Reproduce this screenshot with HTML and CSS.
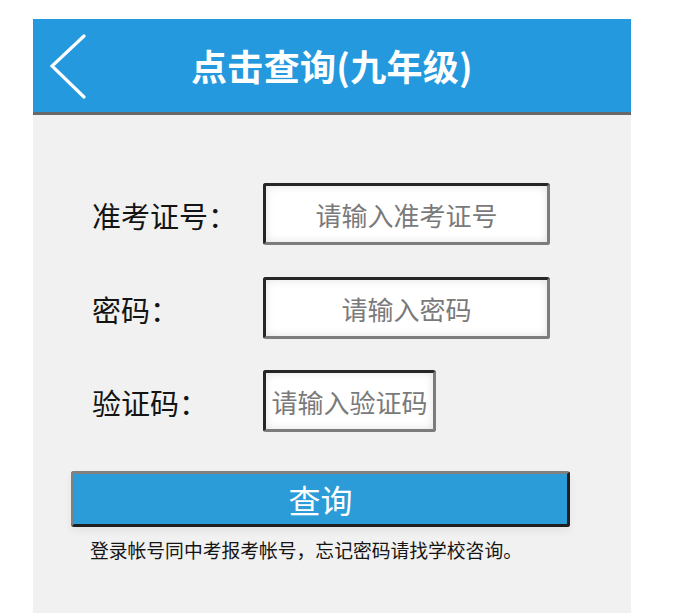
FILE: index.html
```html
<!DOCTYPE html>
<html lang="zh-CN">
<head>
<meta charset="utf-8">
<title>点击查询(九年级)</title>
<link rel="stylesheet" href="styles.css">
</head>
<body>
<div class="page">
  <div class="app">
    <header class="topbar">
      <a class="back" href="#" aria-label="返回">
        <svg width="40" height="66" viewBox="0 0 40 66">
          <polyline points="34,3 2,33 34,64" fill="none" stroke="#ffffff" stroke-width="3.2" stroke-linecap="round" stroke-linejoin="miter"/>
        </svg>
      </a>
      <h1 class="title">点击查询(九年级)</h1>
      <span></span>
    </header>
    <form class="form">
      <div class="row">
        <label class="label">准考证号：</label>
        <input class="field" type="text" placeholder="请输入准考证号">
      </div>
      <div class="row">
        <label class="label">密码：</label>
        <input class="field" type="password" placeholder="请输入密码">
      </div>
      <div class="row">
        <label class="label">验证码：</label>
        <input class="field short" type="text" placeholder="请输入验证码">
      </div>
      <button class="submit" type="button">查询</button>
      <p class="note">登录帐号同中考报考帐号，忘记密码请找学校咨询。</p>
    </form>
  </div>
</div>
</body>
</html>
```
FILE: styles.css
```css
html, body {
  margin: 0;
  padding: 0;
  background: #ffffff;
}
body {
  font-family: "Noto Sans CJK SC", "Noto Sans", sans-serif;
}
.page {
  padding: 19px 0 0 33px;
}
.app {
  width: 598px;
  height: 594px;
  background: #f1f1f1;
  overflow: hidden;
}
.topbar {
  height: 93px;
  background: #2599de;
  border-bottom: 3px solid #686868;
  display: grid;
  grid-template-columns: 1fr auto 1fr;
  align-items: center;
}
.back {
  display: flex;
  align-items: center;
  padding-left: 17px;
  height: 93px;
}
.back svg {
  display: block;
}
.title {
  margin: 0;
  color: #ffffff;
  font-size: 36px;
  font-weight: 700;
  line-height: 1;
  letter-spacing: 0.3px;
  padding-bottom: 2px;
}
.form {
  display: flex;
  flex-direction: column;
  padding: 68px 0 0 0;
  margin: 0;
}
.row {
  display: flex;
  align-items: center;
  height: 62px;
  margin-bottom: 32px;
  padding-left: 59px;
}
.row:nth-child(2) {
  margin-bottom: 31px;
}
.label {
  width: 171px;
  font-size: 29px;
  color: #141414;
  line-height: 1;
  padding-top: 2px;
}
.field {
  box-sizing: border-box;
  width: 287px;
  height: 62px;
  margin: 0;
  padding: 0 4px;
  border-style: solid;
  border-width: 3px;
  border-color: #262626 #7c7c7c #7c7c7c #262626;
  border-radius: 3px;
  background: #ffffff;
  box-shadow: inset 0 0 9px rgba(0, 0, 0, 0.12);
  font-family: "Noto Sans CJK SC", "Noto Sans", sans-serif;
  font-size: 26px;
  color: #333333;
  text-align: center;
  outline: none;
}
.field::placeholder {
  color: #7a7a7a;
  opacity: 1;
}
.field.short {
  width: 173px;
}
.submit {
  box-sizing: border-box;
  margin: 7px 0 0 38px;
  width: 499px;
  height: 56px;
  padding: 0;
  border-style: solid;
  border-width: 3px;
  border-color: #808080 #1f1f1f #1f1f1f #808080;
  border-radius: 3px;
  background: #2b9cd7;
  color: #ffffff;
  font-family: "Noto Sans CJK SC", "Noto Sans", sans-serif;
  font-size: 32px;
  line-height: 1;
  box-shadow: 0 4px 8px rgba(0, 0, 0, 0.06);
}
.note {
  margin: 12px 0 0 57px;
  font-size: 18.8px;
  line-height: 1.2;
  color: #151515;
}
```
